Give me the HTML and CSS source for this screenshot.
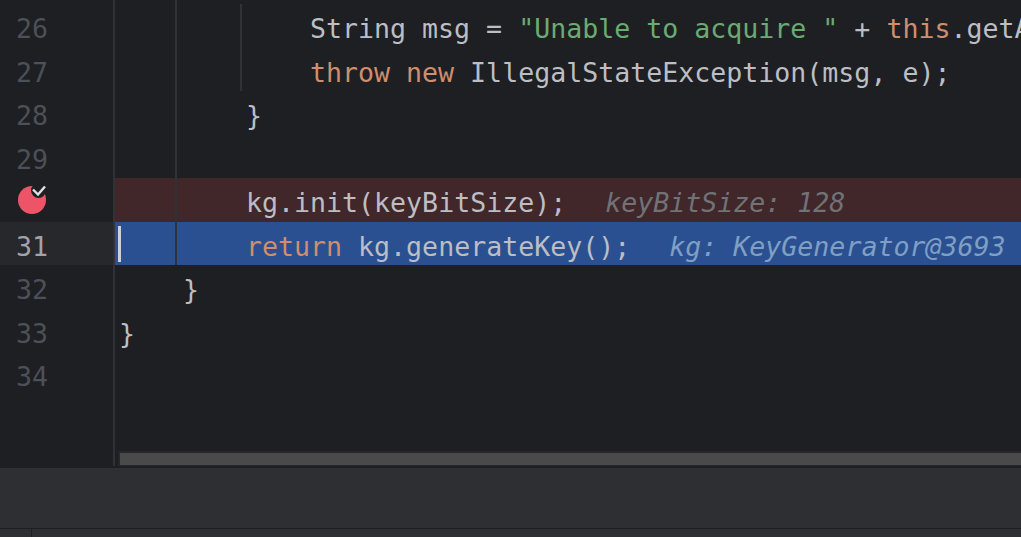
FILE: index.html
```html
<!DOCTYPE html>
<html lang="en">
<head>
<meta charset="utf-8">
<title>Editor</title>
<link rel="stylesheet" href="styles.css">
</head>
<body>
<div class="editor">
  <div class="gutter">
    <div class="num">26</div>
    <div class="num">27</div>
    <div class="num">28</div>
    <div class="num">29</div>
    <div class="num bp-row">
      <svg class="bp" width="32" height="32" viewBox="0 0 32 32">
        <circle cx="15" cy="18" r="14" fill="#ed5467"/>
        <circle cx="21.5" cy="8.5" r="7.5" fill="#1e1f22"/>
        <path d="M16 7.5 L21 12.5 L28 4.5" fill="none" stroke="#dfe1e5" stroke-width="2.4"/>
      </svg>
    </div>
    <div class="num current">31</div>
    <div class="num">32</div>
    <div class="num">33</div>
    <div class="num">34</div>
  </div>
  <div class="code">
    <span class="guide-method"></span>
    <span class="guide-block"></span>
    <span class="caret"></span>
    <div class="line i12"><span>String msg = </span><span class="str">"Unable to acquire "</span><span> + </span><span class="kw">this</span><span>.getAlgorithm();</span></div>
    <div class="line i12"><span class="kw">throw new </span><span>IllegalStateException(msg, e);</span></div>
    <div class="line i8">}</div>
    <div class="line"></div>
    <div class="line i8 line-break"><span>kg.init(keyBitSize);</span><span class="hint hint-break">keyBitSize: 128</span></div>
    <div class="line i8 line-exec"><span class="kw">return </span><span>kg.generateKey();</span><span class="hint hint-exec">kg: KeyGenerator@3693</span></div>
    <div class="line i4">}</div>
    <div class="line">}</div>
    <div class="line"></div>
    <div class="hscroll"><div class="thumb"></div></div>
  </div>
</div>
<div class="panel"></div>
<div class="status"><div class="status-cell"></div></div>
</body>
</html>
```

FILE: styles.css
```css
* { box-sizing: border-box; }
html, body { margin: 0; height: 100%; overflow: hidden; }
body {
  width: 1021px;
  height: 537px;
  display: flex;
  flex-direction: column;
  background: #2e2f33;
  font-family: "DejaVu Sans Mono", monospace;
  font-size: 26.6px;
  color: #bcbec4;
}
.editor {
  display: flex;
  height: 468px;
  background: #1e1f22;
  flex: none;
}
.gutter {
  width: 115px;
  height: 466px;
  padding-top: 4.4px;
  border-right: 2px solid #313236;
  flex: none;
}
.num {
  height: 43.5px;
  line-height: 49px;
  padding-left: 16px;
  color: #4b5059;
}
.bp-row { position: relative; }
.bp { position: absolute; left: 17px; top: 4px; }
.current { background: #26282c; color: #a1a3ab; }
.code {
  position: relative;
  flex: 1;
  min-width: 0;
  padding-top: 4.4px;
  overflow: hidden;
}
.line {
  height: 43.5px;
  line-height: 49.4px;
  padding-left: 4px;
  white-space: pre;
}
.i4 { padding-left: 68px; }
.i8 { padding-left: 131px; }
.i12 { padding-left: 195px; }
.kw { color: #cf8e6d; }
.str { color: #6aab73; }
.line-break { background: #41262a; }
.line-exec { background: #2a5091; }
.hint { font-style: italic; margin-left: 39px; }
.hint-break { color: #6f7378; }
.hint-exec { color: #7f9fc4; }
.guide-method {
  position: absolute;
  left: 60px;
  top: 0;
  height: 265px;
  width: 2px;
  background: #313236;
  z-index: 1;
}
.guide-block {
  position: absolute;
  left: 125px;
  top: 4px;
  height: 87px;
  width: 2px;
  background: #313236;
}
.caret {
  position: absolute;
  left: 3px;
  top: 226px;
  width: 3px;
  height: 36px;
  background: #ced0d6;
  z-index: 1;
}
.hscroll {
  position: absolute;
  left: 3px;
  right: 0;
  top: 451px;
  height: 15px;
  padding: 2px 0 1px 2px;
  background: #26272a;
}
.thumb { height: 12px; background: #4a4a4b; }
.panel { flex: 1; background: #2e2f33; }
.status {
  height: 9px;
  flex: none;
  border-top: 1px solid #1e1f22;
  background: #2e2f33;
}
.status-cell {
  width: 32px;
  height: 8px;
  border-right: 1px solid #1e1f22;
}
```
